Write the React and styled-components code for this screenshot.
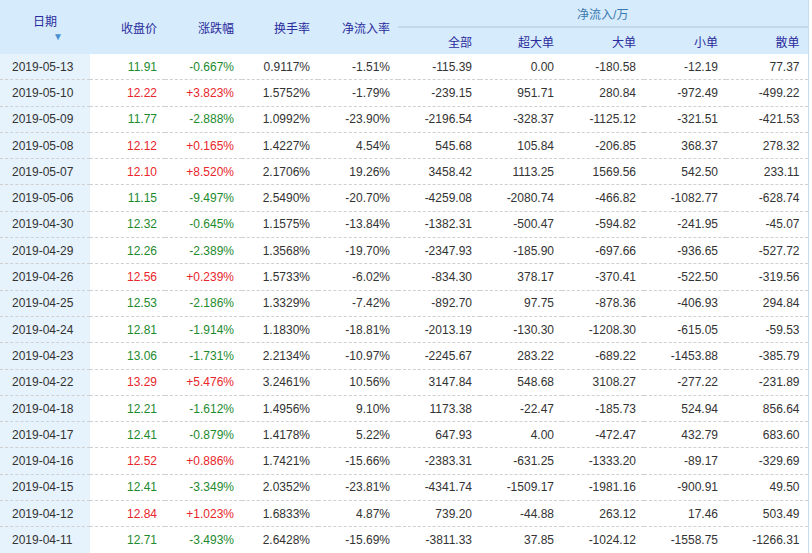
import React from "react";
import styled, { createGlobalStyle } from "styled-components";

const Global = createGlobalStyle`
  body { margin: 0; background: #fff; font-family: "Liberation Sans", "Noto Sans CJK SC", sans-serif; }
`;

const Table = styled.table`
  width: 808px;
  border-collapse: collapse;
  table-layout: fixed;
  font-size: 12px;
  border-right: 1px solid #c8dcee;
`;

const Th = styled.th`
  background: #d6ebfb;
  font-weight: normal;
  text-align: ${(p) => p.align || "right"};
  padding: 0 ${(p) => (p.align === "center" ? 0 : 8)}px;
  height: 26px;
  border-bottom: ${(p) => (p.sub ? "2px solid #c4d8ea" : "none")};
  color: ${(p) => (p.group ? "#3a7ab0" : "#2b2b9e")};
`;

const DateTh = styled(Th)`
  text-align: left;
  padding-left: 33px;
`;

const Td = styled.td`
  text-align: right;
  padding: 0 8px;
  height: 25.3px;
  color: ${(p) => p.color || "#333"};
  border-bottom: 1px dashed #d0d0d0;
  background: #fff;
  white-space: nowrap;
`;

const DateTd = styled(Td)`
  text-align: left;
  padding-left: 12px;
  background: #e6f2fc;
`;

const Arrow = styled.span`
  display: inline-block;
  margin-left: 20px;
  color: #4a90d0;
  font-size: 10px;
`;

const data = `2019-05-13 11.91 -0.667% 0.9117% -1.51% -115.39 0.00 -180.58 -12.19 77.37
2019-05-10 12.22 +3.823% 1.5752% -1.79% -239.15 951.71 280.84 -972.49 -499.22
2019-05-09 11.77 -2.888% 1.0992% -23.90% -2196.54 -328.37 -1125.12 -321.51 -421.53
2019-05-08 12.12 +0.165% 1.4227% 4.54% 545.68 105.84 -206.85 368.37 278.32
2019-05-07 12.10 +8.520% 2.1706% 19.26% 3458.42 1113.25 1569.56 542.50 233.11
2019-05-06 11.15 -9.497% 2.5490% -20.70% -4259.08 -2080.74 -466.82 -1082.77 -628.74
2019-04-30 12.32 -0.645% 1.1575% -13.84% -1382.31 -500.47 -594.82 -241.95 -45.07
2019-04-29 12.26 -2.389% 1.3568% -19.70% -2347.93 -185.90 -697.66 -936.65 -527.72
2019-04-26 12.56 +0.239% 1.5733% -6.02% -834.30 378.17 -370.41 -522.50 -319.56
2019-04-25 12.53 -2.186% 1.3329% -7.42% -892.70 97.75 -878.36 -406.93 294.84
2019-04-24 12.81 -1.914% 1.1830% -18.81% -2013.19 -130.30 -1208.30 -615.05 -59.53
2019-04-23 13.06 -1.731% 2.2134% -10.97% -2245.67 283.22 -689.22 -1453.88 -385.79
2019-04-22 13.29 +5.476% 3.2461% 10.56% 3147.84 548.68 3108.27 -277.22 -231.89
2019-04-18 12.21 -1.612% 1.4956% 9.10% 1173.38 -22.47 -185.73 524.94 856.64
2019-04-17 12.41 -0.879% 1.4178% 5.22% 647.93 4.00 -472.47 432.79 683.60
2019-04-16 12.52 +0.886% 1.7421% -15.66% -2383.31 -631.25 -1333.20 -89.17 -329.69
2019-04-15 12.41 -3.349% 2.0352% -23.81% -4341.74 -1509.17 -1981.16 -900.91 49.50
2019-04-12 12.84 +1.023% 1.6833% 4.87% 739.20 -44.88 263.12 17.46 503.49
2019-04-11 12.71 -3.493% 2.6428% -15.69% -3811.33 37.85 -1024.12 -1558.75 -1266.31`
  .split("\n")
  .map((l) => l.split(" "));

const widths = [90, 75, 77, 76, 80, 82, 82, 82, 82, 82];

export default function App() {
  return (
    <>
      <Global />
      <Table>
        <colgroup>
          {widths.map((w, i) => (
            <col key={i} style={{ width: w }} />
          ))}
        </colgroup>
        <thead>
          <tr>
            <DateTh rowSpan={2}>日期<Arrow>▼</Arrow></DateTh>
            <Th rowSpan={2}>收盘价</Th>
            <Th rowSpan={2}>涨跌幅</Th>
            <Th rowSpan={2}>换手率</Th>
            <Th rowSpan={2}>净流入率</Th>
            <Th colSpan={5} align="center" group sub>净流入/万</Th>
          </tr>
          <tr>
            {["全部", "超大单", "大单", "小单", "散单"].map((t) => (
              <Th key={t}>{t}</Th>
            ))}
          </tr>
        </thead>
        <tbody>
          {data.map((r) => {
            const c = r[2][0] === "+" ? "#e8262b" : "#1d8a2e";
            return (
              <tr key={r[0]}>
                <DateTd>{r[0]}</DateTd>
                <Td color={c}>{r[1]}</Td>
                <Td color={c}>{r[2]}</Td>
                {r.slice(3).map((v, i) => (
                  <Td key={i}>{v}</Td>
                ))}
              </tr>
            );
          })}
        </tbody>
      </Table>
    </>
  );
}
